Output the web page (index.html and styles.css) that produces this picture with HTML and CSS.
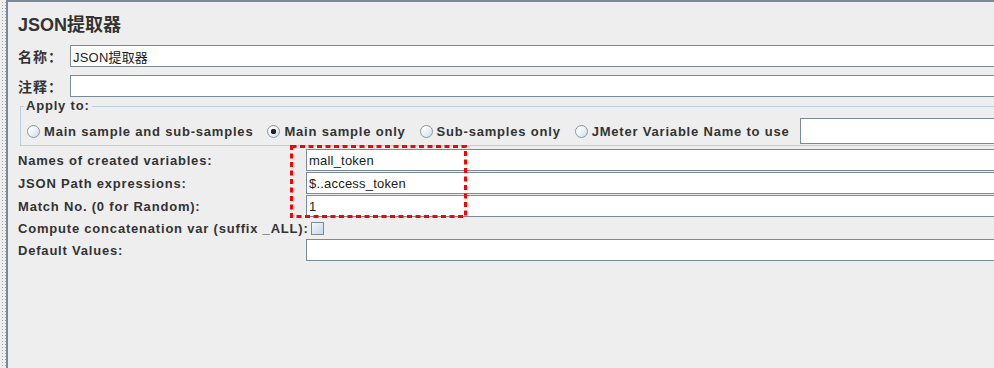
FILE: index.html
```html
<!DOCTYPE html>
<html lang="zh-CN">
<head>
  <meta charset="UTF-8">
  <meta name="viewport" content="width=device-width, initial-scale=1.0">
  <title>JSON提取器</title>
  <link rel="stylesheet" href="styles.css">
</head>
<body>
  <div class="window">
    <div class="grip"></div>
    <div class="panel">
      <h1 class="title">JSON提取器</h1>

      <div class="field-row">
        <label class="cn-label" for="name">名称：</label>
        <input type="text" id="name" class="text-field" value="JSON提取器">
      </div>
      <div class="field-row">
        <label class="cn-label" for="comment">注释：</label>
        <input type="text" id="comment" class="text-field">
      </div>

      <fieldset class="apply-to">
        <legend>Apply to:</legend>
        <div class="scope-row">
          <label class="scope"><input type="radio" name="scope">Main sample and sub-samples</label>
          <label class="scope"><input type="radio" name="scope" checked>Main sample only</label>
          <label class="scope"><input type="radio" name="scope">Sub-samples only</label>
          <label class="scope"><input type="radio" name="scope">JMeter Variable Name to use</label>
          <input type="text" class="text-field scope-var">
        </div>
      </fieldset>

      <div class="extractor-form">
        <label class="form-label" for="refNames">Names of created variables:</label>
        <input type="text" id="refNames" class="text-field" value="mall_token">

        <label class="form-label" for="jsonPath">JSON Path expressions:</label>
        <input type="text" id="jsonPath" class="text-field" value="$..access_token">

        <label class="form-label" for="matchNo">Match No. (0 for Random):</label>
        <input type="text" id="matchNo" class="text-field" value="1">

        <div class="concat-row">
          <label class="form-label" for="computeAll">Compute concatenation var (suffix _ALL):</label>
          <input type="checkbox" id="computeAll" class="check">
        </div>

        <label class="form-label" for="defaults">Default Values:</label>
        <input type="text" id="defaults" class="text-field">

        <!-- red annotation around the three filled fields -->
        <svg class="highlight" width="177" height="73" viewBox="0 0 177 73">
          <rect x="1.5" y="1.5" width="174" height="70" fill="none" stroke="#f00" stroke-width="3" stroke-dasharray="5 3.5"/>
        </svg>
      </div>
    </div>
  </div>
</body>
</html>
```

FILE: styles.css
```css
body {
  margin: 0;
  background-color: #eeeeee;
  color: #333333;
  font-family: "Liberation Sans", "Noto Sans CJK SC", sans-serif;
  overflow: hidden;
}

.window {
  display: flex;
  height: 368px;
}

.grip {
  flex: none;
  width: 6px;
  background-color: #eeeeee;
  background-image:
    linear-gradient(90deg, #eeeeee 2px, transparent 2px),
    linear-gradient(#eeeeee 2px, #a4a4a4 2px);
  background-size: 3px 3px;
}

.panel {
  flex: none;
  width: 1040px;
  padding-left: 10px;
  border-left: 2px solid #7a8a99;
  border-top: 2px solid #7a8a99;
}

.title {
  margin: 12px 0 9px;
  font-size: 18px;
  line-height: 22px;
  font-weight: bold;
}

.field-row {
  display: flex;
  align-items: center;
  height: 22px;
  margin-bottom: 8px;
}

.cn-label {
  flex: none;
  width: 52px;
  font-size: 14px;
  font-weight: bold;
  letter-spacing: 1px;
}

.text-field {
  box-sizing: border-box;
  flex: 1;
  height: 22px;
  margin: 0;
  padding: 0 2px;
  border: 1px solid #7a8a99;
  background: #ffffff;
  color: #222222;
  font-family: "Liberation Sans", "Noto Sans CJK SC", sans-serif;
  font-size: 13px;
  letter-spacing: 0.2px;
  outline: none;
}

.apply-to {
  margin: -7px 0 0 2px;
  padding: 4px 0 1px 6px;
  border: 1px solid #b8cfe5;
}

.apply-to legend {
  margin-left: -3px;
  padding: 0 2px;
  font-size: 13px;
  line-height: 16px;
  font-weight: bold;
  letter-spacing: 0.8px;
}

.scope-row {
  display: flex;
  align-items: center;
  height: 26px;
}

.scope {
  display: flex;
  align-items: center;
  gap: 4px;
  margin-right: 14px;
  font-size: 13px;
  font-weight: bold;
  letter-spacing: 0.8px;
  white-space: nowrap;
}

.scope input {
  appearance: none;
  width: 13px;
  height: 13px;
  margin: 0;
  border: 1px solid #8796a5;
  border-radius: 50%;
  background: linear-gradient(135deg, #ffffff 20%, #cddbe9 100%);
}

.scope input:checked {
  background:
    radial-gradient(circle, #222222 2.5px, transparent 3px),
    linear-gradient(135deg, #ffffff 20%, #cddbe9 100%);
}

.scope-var {
  height: 26px;
  margin-left: -4px;
}

.extractor-form {
  position: relative;
  display: grid;
  grid-template-columns: 288px 1fr;
  grid-template-rows: 22px 22px 22px 20px 22px;
  row-gap: 1px;
  align-items: center;
  margin-top: 3px;
}

.form-label {
  font-size: 13px;
  font-weight: bold;
  letter-spacing: 0.8px;
  white-space: nowrap;
}

.concat-row {
  grid-column: 1 / -1;
  display: flex;
  align-items: center;
  gap: 2px;
}

.check {
  appearance: none;
  width: 13px;
  height: 13px;
  margin: 1px 0 0;
  border: 1px solid #7a8a99;
  background: linear-gradient(135deg, #f2f6fa 0%, #c9d8e7 100%);
}

.highlight {
  position: absolute;
  left: 272px;
  top: -4px;
}
```
